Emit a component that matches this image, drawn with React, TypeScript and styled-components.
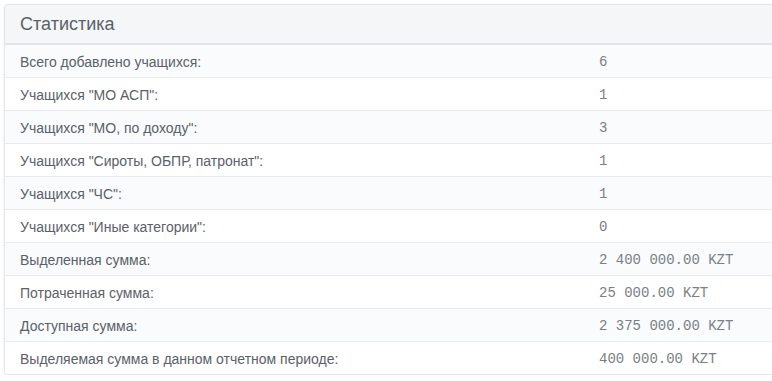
import styled, { createGlobalStyle } from 'styled-components';

const GlobalStyle = createGlobalStyle`
  html, body {
    margin: 0;
    padding: 0;
    background: #ffffff;
    overflow: hidden;
  }
  body {
    font-family: "Liberation Sans", Arial, sans-serif;
  }
`;

const Page = styled.div`
  padding: 4px 0 0 4px;
`;

const Card = styled.div`
  width: 790px;
  border: 1px solid #e3e6ea;
  border-radius: 4px;
  background: #ffffff;
  box-shadow: 0 1px 3px rgba(0, 0, 0, 0.08);
  overflow: hidden;
`;

const CardHeader = styled.div`
  height: 38px;
  display: flex;
  align-items: center;
  padding: 0 15px;
  background: #f5f6f7;
  border-bottom: 2px solid #e2e5e8;
  font-size: 18px;
  color: #5a6169;
`;

const Row = styled.div<{ $striped: boolean }>`
  display: grid;
  grid-template-columns: 578px 1fr;
  height: 32px;
  align-items: center;
  background: ${(p) => (p.$striped ? '#f9fbfd' : '#ffffff')};
  border-top: 1px solid #e8ebee;

  &:first-of-type {
    border-top: none;
  }
`;

const Label = styled.div`
  padding-left: 15px;
  padding-top: 1px;
  font-size: 14px;
  color: #5b6168;
`;

const Value = styled.div`
  padding-left: 16px;
  padding-top: 1px;
  font-family: "Liberation Mono", "Courier New", monospace;
  font-size: 14px;
  color: #7a8086;
`;

const stats: [string, string][] = [
  ['Всего добавлено учащихся:', '6'],
  ['Учащихся "МО АСП":', '1'],
  ['Учащихся "МО, по доходу":', '3'],
  ['Учащихся "Сироты, ОБПР, патронат":', '1'],
  ['Учащихся "ЧС":', '1'],
  ['Учащихся "Иные категории":', '0'],
  ['Выделенная сумма:', '2 400 000.00 KZT'],
  ['Потраченная сумма:', '25 000.00 KZT'],
  ['Доступная сумма:', '2 375 000.00 KZT'],
  ['Выделяемая сумма в данном отчетном периоде:', '400 000.00 KZT'],
];

export default function App() {
  return (
    <>
      <GlobalStyle />
      <Page>
        <Card>
          <CardHeader>Статистика</CardHeader>
          <div>
            {stats.map(([label, value], i) => (
              <Row key={label} $striped={i % 2 === 0}>
                <Label>{label}</Label>
                <Value>{value}</Value>
              </Row>
            ))}
          </div>
        </Card>
      </Page>
    </>
  );
}
